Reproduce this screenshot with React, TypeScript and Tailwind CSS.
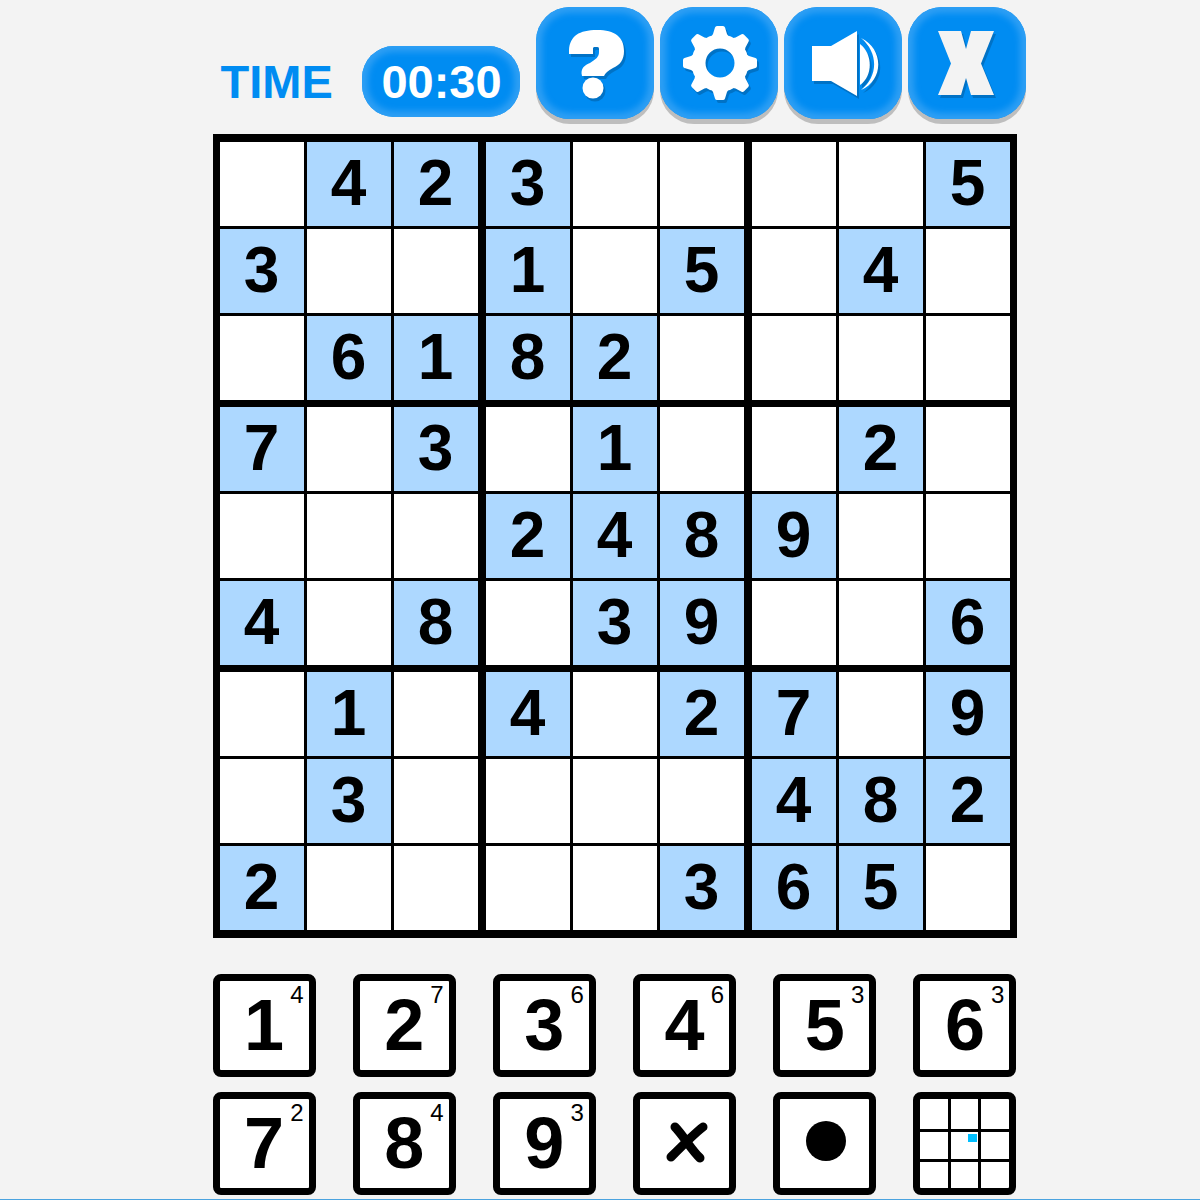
import type { ReactNode } from "react";

const rows = [
  "042300005",
  "300105040",
  "061820000",
  "703010020",
  "000248900",
  "408039006",
  "010402709",
  "030000482",
  "200003650",
];

const keys = [
  { digit: 1, left: 4 },
  { digit: 2, left: 7 },
  { digit: 3, left: 6 },
  { digit: 4, left: 6 },
  { digit: 5, left: 3 },
  { digit: 6, left: 3 },
  { digit: 7, left: 2 },
  { digit: 8, left: 4 },
  { digit: 9, left: 3 },
];

const thirds = [0, 1, 2];

function ToolButton({ label, children }: { label: string; children: ReactNode }) {
  return (
    <button
      type="button"
      aria-label={label}
      className="h-28 min-w-0 flex-1 rounded-[34px] bg-[#008cf2] shadow-[0_5px_0_#bebebe,inset_0_0_6px_6px_#2e9ff4]"
    >
      <svg
        viewBox="0 0 118 112"
        className="h-28 w-full drop-shadow-[2px_3px_0_#0072c6]"
        fill="white"
        aria-hidden="true"
      >
        {children}
      </svg>
    </button>
  );
}

function HelpIcon() {
  return (
    <>
      <path d="M33 47V43C34 29 43 23 61 23C79 23 88 30 88 44C88 53 84 58 77 61C72 64 69 66 68 69H46C44 61 49 58 54 56C60 52 63 50 63 45V42C63 40 62 40 60 40C57 40 57 40 57 43V47Z" />
      <circle cx="57" cy="81" r="10.5" />
    </>
  );
}

const teeth = [0, 45, 90, 135, 180, 225, 270, 315];

function GearIcon() {
  return (
    <>
      <circle cx="60" cy="56" r="21.5" fill="none" stroke="white" strokeWidth="14" />
      {teeth.map((angle) => (
        <path
          key={angle}
          transform={`rotate(${angle} 60 56)`}
          d="M50 31Q52 29 53 27L55 20.500Q55.500 19 57 19H63Q64.500 19 65 20.500L67 27Q68 29 70 31Z"
        />
      ))}
    </>
  );
}

function SoundIcon() {
  return (
    <>
      <path d="M28 39H47L73 24V89L47 74H28Z" />
      <path d="M76 37C89 47 89 69 76 78Z" />
      <path d="M77 31C100 42 100 73 77 83C94 70 95 46 77 31Z" />
    </>
  );
}

function CloseIcon() {
  return (
    <path
      fill="#f3f3f3"
      d="M30 24H53L58 42L63 24H86L73 56.500L86 88H63L58 71L53 88H30L43 56.500Z"
    />
  );
}

function Cell({ value }: { value: string }) {
  const given = value !== "0";
  return (
    <button
      type="button"
      aria-label={given ? value : "empty"}
      className={
        "flex aspect-square min-w-0 items-center justify-center pb-0.5 text-[64px] leading-none font-bold " +
        (given ? "bg-[#add8ff]" : "bg-white")
      }
    >
      {given ? value : ""}
    </button>
  );
}

const keyClass =
  "relative flex aspect-square w-[103px] min-w-0 items-center justify-center rounded-lg border-[7px] border-black bg-white";

export default function App() {
  return (
    <div className="min-h-screen border-b border-[#4ba3df] bg-[#f3f3f3] pl-[29px] font-['Liberation_Sans',Arial,sans-serif] text-black">
      <main className="mx-auto w-full max-w-[804px] pb-1">
        <header className="-mr-[9px] flex pt-[7px]">
          <div className="mt-[39px] flex h-[71px] items-center pb-px">
            <span className="w-[149px] pl-2 text-[47px] leading-none font-bold text-[#008cf2]">
              TIME
            </span>
            <time className="flex h-[71px] w-[158px] items-center justify-center rounded-[32px] bg-[#008cf2] pl-0.5 text-[47px] leading-none font-bold text-white shadow-[inset_0_0_6px_6px_#2e9ff4]">
              00:30
            </time>
          </div>
          <nav aria-label="Game" className="ml-4 flex flex-1 gap-[6px]">
            <ToolButton label="Help">
              <HelpIcon />
            </ToolButton>
            <ToolButton label="Settings">
              <GearIcon />
            </ToolButton>
            <ToolButton label="Sound">
              <SoundIcon />
            </ToolButton>
            <ToolButton label="Close">
              <CloseIcon />
            </ToolButton>
          </nav>
        </header>

        <section
          aria-label="Sudoku board"
          className="mt-[15px] grid grid-cols-3 gap-x-2 gap-y-[7px] border-x-[7px] border-y-8 border-black bg-black"
        >
          {thirds.map((band) =>
            thirds.map((stack) => (
              <div key={`${band}${stack}`} className="grid grid-cols-3 gap-[3px]">
                {rows
                  .slice(band * 3, band * 3 + 3)
                  .map((row, y) =>
                    row
                      .slice(stack * 3, stack * 3 + 3)
                      .split("")
                      .map((value, x) => <Cell key={`${y}${x}`} value={value} />)
                  )}
              </div>
            ))
          )}
        </section>

        <section
          aria-label="Number keys"
          className="mt-9 grid grid-cols-[repeat(6,auto)] justify-between gap-y-[15px]"
        >
          {keys.map(({ digit, left }) => (
            <button key={digit} type="button" className={keyClass}>
              <span className="pb-0.5 text-[72px] leading-none font-bold">{digit}</span>
              <span className="absolute top-0.5 right-[5px] text-2xl leading-none">{left}</span>
            </button>
          ))}
          <button type="button" aria-label="Erase" className={keyClass}>
            <svg viewBox="0 0 89 89" className="w-full" aria-hidden="true">
              <path
                d="M35 28C43 36 52 52 60 59M63 28C55 34 38 51 31 58"
                fill="none"
                stroke="black"
                strokeWidth="9"
                strokeLinecap="round"
              />
            </svg>
          </button>
          <button type="button" aria-label="Mark" className={keyClass}>
            <svg viewBox="0 0 89 89" className="w-full" aria-hidden="true">
              <circle cx="46" cy="42" r="20" />
            </svg>
          </button>
          <button type="button" aria-label="Pencil notes" className={keyClass}>
            <svg viewBox="0 0 89 89" className="w-full" aria-hidden="true">
              <path d="M29.500 0V89M59.500 0V89M0 31.500H89M0 61.500H89" stroke="black" strokeWidth="3" />
              <rect x="48" y="35" width="9" height="8" fill="#00bfff" />
            </svg>
          </button>
        </section>
      </main>
    </div>
  );
}
